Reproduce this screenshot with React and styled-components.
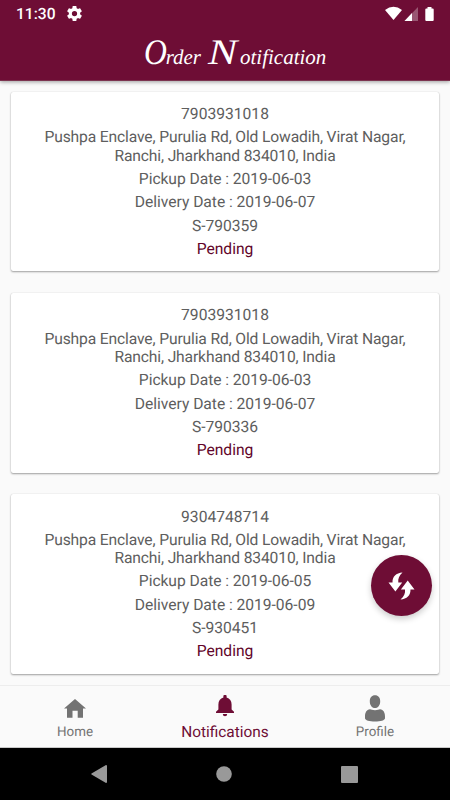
import React from "react";
import styled, { createGlobalStyle } from "styled-components";

const WINE = "#6e0d35";

const GlobalStyle = createGlobalStyle`
  *, *::before, *::after { box-sizing: border-box; }
  body {
    margin: 0;
    background: #fafafa;
    font-family: Roboto, "Liberation Sans", sans-serif;
    text-rendering: geometricPrecision;
  }
`;

const Screen = styled.div`
  position: relative;
  display: flex;
  flex-direction: column;
  width: 450px;
  height: 800px;
  overflow: hidden;
  background: #fafafa;
`;

const Header = styled.header`
  position: relative;
  flex: none;
  height: 81px;
  color: #fff;
  background: ${WINE};
  border-bottom: 1px solid #7c3450;
  box-shadow: 0 1px 4px rgba(0, 0, 0, 0.38);
`;

const StatusBar = styled.div`
  display: flex;
  align-items: center;
  height: 27px;
  padding: 0 15px 0 16px;
`;

const Clock = styled.span`
  width: 51px;
  font-size: 15.6px;
  font-weight: 500;
  line-height: 27px;
  padding-top: 1px;
`;

const StatusIcons = styled.div`
  display: flex;
  align-items: center;
  margin-left: auto;
`;

const Title = styled.h1`
  display: flex;
  align-items: baseline;
  justify-content: center;
  height: 53px;
  margin: -1px 0 0;
  padding-left: 20px;
  font: italic 400 21px/53px "Liberation Serif", serif;
`;

const Initial = styled.span`
  width: ${({ $width }) => $width}px;
  margin-left: ${({ $gap }) => $gap || 0}px;
  font-size: 36px;
  line-height: 53px;
  transform: scaleX(${({ $stretch }) => $stretch || 1});
  transform-origin: left;
`;

const List = styled.main`
  flex: 1;
  min-height: 0;
  display: flex;
  flex-direction: column;
  gap: 21.8px;
  padding: 11px 11px 0;
  overflow: hidden;
`;

const Card = styled.article`
  flex: none;
  display: flex;
  flex-direction: column;
  gap: 5px;
  height: 179.4px;
  padding: 13.2px 12px 0;
  border-radius: 2px;
  background: #fff;
  box-shadow: 0 1px 2px rgba(0, 0, 0, 0.36), 0 0 1px rgba(0, 0, 0, 0.18);
`;

const Line = styled.p`
  margin: 0;
  color: ${({ $status }) => ($status ? "#62052a" : "#5e5e5e")};
  font-size: 15.65px;
  line-height: 18.3px;
  letter-spacing: ${({ $tracking }) => $tracking || 0}px;
  text-align: center;
`;

const RefreshButton = styled.button`
  position: absolute;
  right: 18px;
  top: 555px;
  display: grid;
  place-items: center;
  width: 61px;
  height: 61px;
  padding: 0;
  border: 0;
  border-radius: 50%;
  background: ${WINE};
  box-shadow: 0 3px 6px rgba(0, 0, 0, 0.2);
`;

const Tabs = styled.nav`
  flex: none;
  display: grid;
  grid-template-columns: repeat(3, 1fr);
  height: 63px;
  background: #fafafa;
  border-top: 1px solid #ededed;
  border-bottom: 1px solid #c8c8c8;
`;

const Tab = styled.a`
  display: grid;
  grid-template-rows: 36px 20px;
  align-content: start;
  justify-items: center;
  align-items: center;
  color: ${({ $active }) => ($active ? WINE : "#737373")};
  font-size: ${({ $active }) => ($active ? 15.4 : 13.4)}px;
  line-height: 20px;
`;

const TabLabel = styled.span`
  margin-top: ${({ $active }) => ($active ? 0 : 2)}px;
`;

const TabIcon = styled.span`
  display: flex;
  justify-content: center;
  align-items: flex-end;
  height: 36px;
  padding-bottom: ${({ $lift }) => $lift}px;
`;

const SystemBar = styled.footer`
  flex: none;
  display: flex;
  align-items: center;
  justify-content: space-between;
  height: 52px;
  padding: 0 92px 0 91px;
  background: #000;
`;

const Gear = () => (
  <svg width="15" height="15" viewBox="2 2 20 20" fill="#fff">
    <path d="M19.43 12.98c.04-.32.07-.64.07-.98s-.03-.66-.07-.98l2.11-1.65c.19-.15.24-.42.12-.64l-2-3.46c-.12-.22-.39-.3-.61-.22l-2.49 1c-.52-.4-1.08-.73-1.69-.98l-.38-2.65C14.46 2.18 14.25 2 14 2h-4c-.25 0-.46.18-.49.42l-.38 2.65c-.61.25-1.17.59-1.69.98l-2.49-1c-.23-.09-.49 0-.61.22l-2 3.46c-.13.22-.07.49.12.64l2.11 1.65c-.04.32-.07.65-.07.98s.03.66.07.98l-2.11 1.65c-.19.15-.24.42-.12.64l2 3.46c.12.22.39.3.61.22l2.49-1c.52.4 1.08.73 1.69.98l.38 2.65c.03.24.24.42.49.42h4c.25 0 .46-.18.49-.42l.38-2.65c.61-.25 1.17-.59 1.69-.98l2.49 1c.23.09.49 0 .61-.22l2-3.46c.12-.22.07-.49-.12-.64l-2.11-1.65zM12 15.5A3.5 3.5 0 1 1 12 8.5a3.5 3.5 0 0 1 0 7z" />
  </svg>
);

const SystemStatus = () => (
  <svg width="50" height="16" viewBox="0 0 50 16" fill="#fff">
    <path d="M0 4Q8.5-2.5 17 4L8.5 14Z" />
    <path d="M33 1V15H19.5Z" opacity=".3" />
    <path d="M27 7V15H19.5Z" />
    <path d="M42.5 1h4v1.5h1.2a1 1 0 0 1 1 1V14a1 1 0 0 1-1 1h-6.4a1 1 0 0 1-1-1V3.5a1 1 0 0 1 1-1h1.2Z" />
  </svg>
);

const RefreshIcon = () => (
  <svg width="28" height="28" viewBox="0 0 28 28" fill="#fff">
    <path d="M14.5 .5C8 1 4.400 4.500 4.500 10.500H.5L7.400 19.500l6.800-9H10.300C9.800 6.800 11.300 3.300 14.500 .5Z" />
    <path d="M12.500 27.500c6.500-.5 10.100-4 10-10h4L19.700 8.500l-6.800 9h4.100c.5 3.700-1 7.200-4.500 10Z" />
  </svg>
);

const HomeIcon = () => (
  <svg width="22" height="19" viewBox="0 0 22 19" fill="currentColor">
    <path d="M11 0 22 9.4h-3V18.7h-5.3v-7H8.5v7H3V9.4H0Z" />
  </svg>
);

const BellIcon = () => (
  <svg width="18" height="22" viewBox="0 0 18 22" fill="currentColor">
    <path d="M9 0a1.5 1.5 0 0 1 1.6 1.8v.6c3.2.8 5 3.5 5 7v5.1L18 16.8v1.1H0v-1.1l2.4-2.3V9.4c0-3.5 1.8-6.2 5-7v-.6A1.5 1.5 0 0 1 9 0Z" />
    <path d="M6.8 19h4.4a2.2 2.2 0 0 1-4.4 0Z" />
  </svg>
);

const ProfileIcon = () => (
  <svg width="22" height="27" viewBox="0 0 22 27" fill="currentColor">
    <path d="M11 .3c3.3 0 5.2 2.5 5.2 6 0 3.8-2 6.8-5.2 6.8s-5.2-3-5.2-6.8c0-3.5 1.900-6 5.200-6Z" />
    <path d="M6 14.2c1.4 0 2.2 1 5 1s3.6-1 5-1c3.5.3 5 3.5 5 7.2v1.8c0 2-4.5 3.300-10 3.300S1 25.200 1 23.200v-1.800c0-3.700 1.500-6.900 5-7.200Z" />
  </svg>
);

const BackIcon = () => (
  <svg width="16" height="18" viewBox="0 0 16 18" fill="#999">
    <path d="M15 0q1 0 1 1v16q0 1-1 1L.5 9.6Q0 9 .5 8.4Z" />
  </svg>
);

const CircleIcon = () => (
  <svg width="16" height="16" viewBox="0 0 16 16" fill="#999">
    <circle cx="8" cy="8" r="7.8" />
  </svg>
);

const SquareIcon = () => (
  <svg width="17" height="17" viewBox="0 0 17 17" fill="#999">
    <rect width="17" height="17" rx="1" />
  </svg>
);

const ADDRESS = "Pushpa Enclave, Purulia Rd, Old Lowadih, Virat Nagar, Ranchi, Jharkhand 834010, India";

const ORDERS = [
  { phone: "7903931018", pickup: "2019-06-03", delivery: "2019-06-07", code: "S-790359" },
  { phone: "7903931018", pickup: "2019-06-03", delivery: "2019-06-07", code: "S-790336" },
  { phone: "9304748714", pickup: "2019-06-05", delivery: "2019-06-09", code: "S-930451" },
];

const TABS = [
  { label: "Home", Icon: HomeIcon, lift: 4 },
  { label: "Notifications", Icon: BellIcon, lift: 5, active: true },
  { label: "Profile", Icon: ProfileIcon, lift: 0 },
];

export default function App() {
  return (
    <>
      <GlobalStyle />
      <Screen>
        <Header>
          <StatusBar>
            <Clock>11:30</Clock>
            <Gear />
            <StatusIcons>
              <SystemStatus />
            </StatusIcons>
          </StatusBar>
          <Title>
            <Initial $width={22} $stretch={0.88}>O</Initial>rder
            <Initial $width={32} $gap={7} $stretch={1.22}>N</Initial>otification
          </Title>
        </Header>
        <List>
          {ORDERS.map((order) => (
            <Card key={order.code}>
              <Line>{order.phone}</Line>
              <Line $tracking={-0.14}>{ADDRESS}</Line>
              <Line $tracking={-0.06}>{`Pickup Date : ${order.pickup}`}</Line>
              <Line $tracking={-0.04}>{`Delivery Date : ${order.delivery}`}</Line>
              <Line $tracking={-0.04}>{order.code}</Line>
              <Line $status>Pending</Line>
            </Card>
          ))}
        </List>
        <Tabs>
          {TABS.map(({ label, Icon, lift, active }) => (
            <Tab key={label} $active={active}>
              <TabIcon $lift={lift}>
                <Icon />
              </TabIcon>
              <TabLabel $active={active}>{label}</TabLabel>
            </Tab>
          ))}
        </Tabs>
        <SystemBar>
          <BackIcon />
          <CircleIcon />
          <SquareIcon />
        </SystemBar>
        <RefreshButton aria-label="Refresh">
          <RefreshIcon />
        </RefreshButton>
      </Screen>
    </>
  );
}
